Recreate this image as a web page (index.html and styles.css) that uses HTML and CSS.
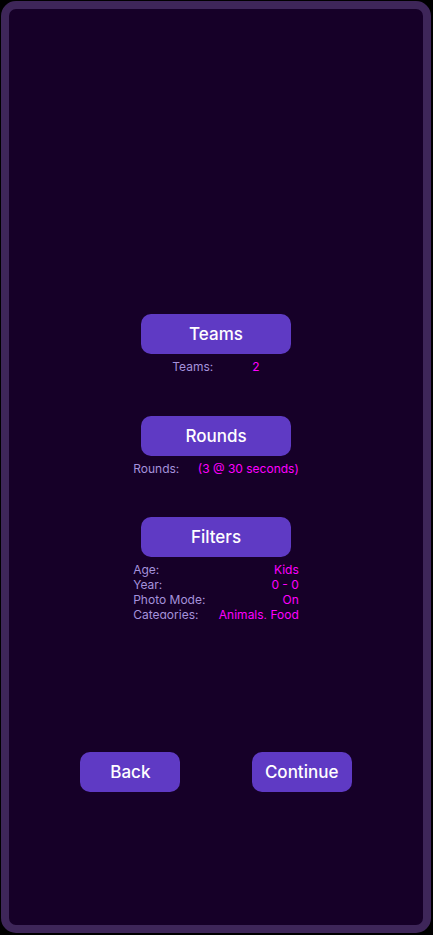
FILE: index.html
```html
<!DOCTYPE html>
<html lang="en">
<head>
<meta charset="utf-8">
<meta name="viewport" content="width=device-width, initial-scale=1">
<title>Game setup</title>
<link rel="stylesheet" href="styles.css">
</head>
<body>
<main class="screen">
  <div class="settings">
    <section class="setting">
      <button class="button" type="button">Teams</button>
      <dl class="summary">
        <div class="row row-even"><dt>Teams:</dt><dd>2</dd></div>
      </dl>
    </section>
    <section class="setting">
      <button class="button" type="button">Rounds</button>
      <dl class="summary">
        <div class="row"><dt>Rounds:</dt><dd>(3 @ 30 seconds)</dd></div>
      </dl>
    </section>
    <section class="setting">
      <button class="button" type="button">Filters</button>
      <dl class="summary">
        <div class="row"><dt>Age:</dt><dd>Kids</dd></div>
        <div class="row"><dt>Year:</dt><dd>0 - 0</dd></div>
        <div class="row"><dt>Photo Mode:</dt><dd>On</dd></div>
        <div class="row"><dt>Categories:</dt><dd>Animals, Food</dd></div>
      </dl>
    </section>
  </div>
  <nav class="actions">
    <button class="button button-small" type="button">Back</button>
    <button class="button button-small" type="button">Continue</button>
  </nav>
</main>
</body>
</html>
```
FILE: styles.css
```css
* {
  box-sizing: border-box;
}

body {
  margin: 0;
  padding: 1px 2px 2px 1px;
  height: 100vh;
  background: #000;
  font-family: Inter, "Liberation Sans", sans-serif;
}

.screen {
  display: grid;
  grid-template-rows: repeat(3, minmax(0, 1fr));
  height: 100%;
  border: 8px solid #3e2659;
  border-radius: 15px;
  background: #160028;
}

.settings {
  grid-row: 2;
  display: grid;
  grid-template-rows: repeat(3, minmax(0, 1fr));
  padding-bottom: 1px;
}

.setting {
  display: flex;
  flex-direction: column;
  align-items: center;
  gap: 5px;
  min-height: 0;
}

.button {
  flex: none;
  width: 150px;
  height: 40px;
  padding: 0;
  border: 0;
  border-radius: 10px;
  background: #5f3ac4;
  color: #fff;
  font: 500 17px/20px Inter, "Liberation Sans", sans-serif;
}

.button-small {
  width: 100px;
}

.summary {
  flex: 1;
  width: 40%;
  min-height: 0;
  margin: 0;
  overflow: hidden;
  font-size: 12px;
  line-height: 15px;
  white-space: nowrap;
}

.row {
  display: flex;
  justify-content: space-between;
}

.row-even {
  justify-content: space-evenly;
}

dt {
  color: #a592dc;
}

dd {
  margin: 0;
  color: #ff00ff;
}

.actions {
  grid-row: 3;
  display: flex;
  align-items: center;
  justify-content: space-evenly;
}
```
